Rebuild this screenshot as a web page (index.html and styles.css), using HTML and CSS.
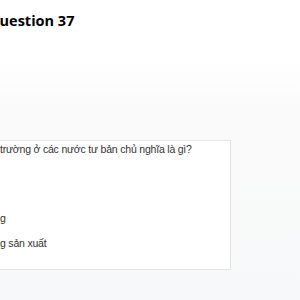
FILE: index.html
```html
<!DOCTYPE html>
<html lang="vi">
<head>
  <meta charset="UTF-8" />
  <meta name="viewport" content="width=device-width, initial-scale=1.0"/>
  <title>Question 37</title>
  <link rel="stylesheet" href="styles.css">
</head>
<body>
  <div class="page">
    <h2 class="q-title">Question 37</h2>

    <div class="q-card">
      <p class="q-text">trường ở các nước tư bản chủ nghĩa là gì?</p>
      <div class="q-options">
        <div class="q-option">g</div>
        <div class="q-option">g sản xuất</div>
      </div>
    </div>
  </div>
</body>
</html>
```

FILE: styles.css
```css
html, body {
  margin: 0;
  height: 100%;
}

body {
  font-family: Arial, "Liberation Sans", sans-serif;
  background: linear-gradient(#ffffff 0px, #ffffff 60px, #fafafa 110px, #f7f8f9 300px);
  overflow: hidden;
}

.page {
  width: 300px;
  height: 300px;
}

.q-title {
  margin: 0;
  padding-top: 11px;
  margin-left: -12px;
  font-family: "Open Sans", "Noto Sans", sans-serif;
  font-weight: bold;
  font-size: 14.5px;
  line-height: 20px;
  color: #000;
}

.q-card {
  margin-top: 109px;
  width: 231px;
  height: 130px;
  background-color: white;
  border: 1px solid #e6e6e6;
  border-left: none;
  box-sizing: border-box;
}

.q-text {
  margin: 0;
  padding-top: 1px;
  font-size: 10.5px;
  letter-spacing: -0.2px;
  line-height: 14px;
  color: #333;
}

.q-options {
  margin-top: 55px;
  display: flex;
  flex-direction: column;
  gap: 11px;
}

.q-option {
  font-size: 10.5px;
  letter-spacing: -0.2px;
  line-height: 14px;
  color: #333;
}
```
